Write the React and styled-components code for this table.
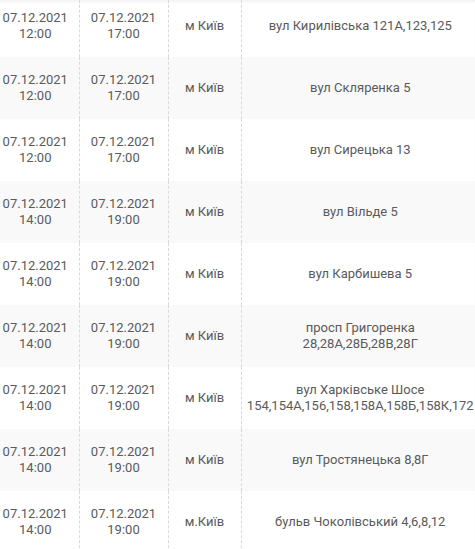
import React from 'react';
import styled, { createGlobalStyle } from 'styled-components';

const GlobalStyle = createGlobalStyle`
  html, body {
    margin: 0;
    padding: 0;
    background: #fff;
    overflow: hidden;
  }
`;

const Wrap = styled.div`
  width: 475px;
  height: 549px;
  overflow: hidden;
  box-shadow: inset 0 4px 4px -3px rgba(0, 0, 0, 0.08);
`;

const Table = styled.table`
  border-collapse: collapse;
  table-layout: fixed;
  width: 487px;
  margin: -5px 0 0 -8px;
  font-family: Roboto, 'Liberation Sans', sans-serif;
  font-size: 13px;
  line-height: 16px;
  color: #5a5a5a;
`;

const Col = styled.col`
  width: ${({ w }) => w}px;
`;

const Row = styled.tr`
  height: 62px;
  background: ${({ shaded }) => (shaded ? '#f9f9f9' : 'transparent')};
`;

const Cell = styled.td`
  text-align: center;
  vertical-align: middle;
  padding: 0 4px;
  border-left: 1px dashed #d9d9d9;

  &:first-child {
    border-left: none;
  }
`;

const widths = [87, 89, 73, 238];

const rows = [
  ['12:00', '17:00', 'м Київ', ['вул Кирилівська 121А,123,125']],
  ['12:00', '17:00', 'м Київ', ['вул Скляренка 5']],
  ['12:00', '17:00', 'м Київ', ['вул Сирецька 13']],
  ['14:00', '19:00', 'м Київ', ['вул Вільде 5']],
  ['14:00', '19:00', 'м Київ', ['вул Карбишева 5']],
  ['14:00', '19:00', 'м Київ', ['просп Григоренка', '28,28А,28Б,28В,28Г']],
  ['14:00', '19:00', 'м Київ', ['вул Харківське Шосе', '154,154А,156,158,158А,158Б,158К,172']],
  ['14:00', '19:00', 'м Київ', ['вул Тростянецька 8,8Г']],
  ['14:00', '19:00', 'м.Київ', ['бульв Чоколівський 4,6,8,12']],
];

const Lines = ({ items }) =>
  items.map((t, i) => (
    <React.Fragment key={i}>
      {i > 0 && <br />}
      {t}
    </React.Fragment>
  ));

export default function App() {
  return (
    <>
      <GlobalStyle />
      <Wrap>
        <Table>
          <colgroup>
            {widths.map((w, i) => (
              <Col key={i} w={w} />
            ))}
          </colgroup>
          <tbody>
            {rows.map(([from, to, city, addr], i) => (
              <Row key={i} shaded={i % 2 === 1}>
                <Cell><Lines items={['07.12.2021', from]} /></Cell>
                <Cell><Lines items={['07.12.2021', to]} /></Cell>
                <Cell>{city}</Cell>
                <Cell><Lines items={addr} /></Cell>
              </Row>
            ))}
          </tbody>
        </Table>
      </Wrap>
    </>
  );
}
